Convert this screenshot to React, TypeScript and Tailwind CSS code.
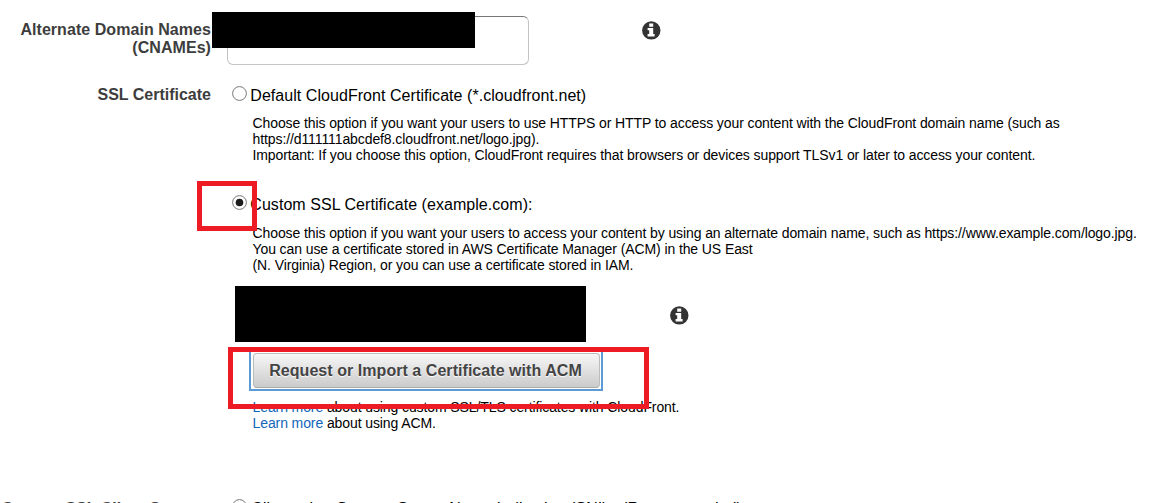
import React from 'react';

interface RowProps {
  label: React.ReactNode;
  className?: string;
  labelClassName?: string;
  children: React.ReactNode;
}

const FormRow: React.FC<RowProps> = ({ label, className = '', labelClassName = '', children }) => (
  <div className={`flex ${className}`}>
    <div className={`w-[211px] shrink-0 text-right font-bold text-[16px] leading-[18px] text-[#3d3d3d] whitespace-nowrap ${labelClassName}`}>
      {label}
    </div>
    <div className="flex-1 min-w-0">{children}</div>
  </div>
);

interface RadioOptionProps {
  checked?: boolean;
  className?: string;
  children: React.ReactNode;
}

const RadioOption: React.FC<RadioOptionProps> = ({ checked, className = '', children }) => (
  <label className={`flex h-5 ml-[21px] text-[16px] leading-5 tracking-[0.05px] whitespace-nowrap ${className}`}>
    <svg className="w-[15px] h-[15px] shrink-0 mr-[3.3px]" viewBox="0 0 15 15">
      <circle cx="7.5" cy="7.5" r="6.9" fill="#fff" stroke="#777" strokeWidth="1" />
      {checked && <circle cx="7.5" cy="7.5" r="3.8" fill="#1c1c1c" />}
    </svg>
    {children}
  </label>
);

const InfoIcon: React.FC<{ className?: string }> = ({ className = '' }) => (
  <svg className={`w-[19px] h-[19px] ${className}`} viewBox="0 0 19 19">
    <circle cx="9.3" cy="9.4" r="9.2" fill="#333" />
    <path d="M7.2 2.6h4v3.2h-4zM5.6 7.1h5.6v6h1.4v2.4h-7v-2.4h1.6V9.3H5.6z" fill="#fff" />
  </svg>
);

const Link: React.FC<{ children: React.ReactNode }> = ({ children }) => (
  <a href="#" className="text-[#1166bb]">{children}</a>
);

export default function App() {
  return (
    <div className="relative w-[1156px] h-[503px] overflow-hidden bg-white text-black font-['Liberation_Sans',Arial,sans-serif]">
      {/* Alternate domain names */}
      <FormRow
        className="h-[86px] pt-4"
        labelClassName="pt-[5px] tracking-[0.055px]"
        label={<>Alternate Domain Names<br />(CNAMEs)</>}
      >
        <div className="flex">
          <div className="ml-4 w-[302px] h-[49px] rounded-md border border-[#c4c4c4] border-t-[#777]" />
          <InfoIcon className="ml-[113px] mt-[5px]" />
        </div>
      </FormRow>

      {/* SSL certificate */}
      <FormRow label="SSL Certificate" className="h-[413px]">
        <RadioOption>
          <span>Default CloudFront Certificate (*.cloudfront.net)</span>
        </RadioOption>
        <div className="ml-[41.5px] mt-[9px] text-[14px] leading-4 tracking-[-0.095px] whitespace-nowrap">
          <p>Choose this option if you want your users to use HTTPS or HTTP to access your content with the CloudFront domain name (such as</p>
          <p>https://d111111abcdef8.cloudfront.net/logo.jpg).</p>
          <p>Important: If you choose this option, CloudFront requires that browsers or devices support TLSv1 or later to access your content.</p>
        </div>

        <RadioOption checked className="mt-8">
          <span>Custom SSL Certificate (example.com):</span>
        </RadioOption>
        <div className="ml-[41.5px] mt-[10px] text-[14px] leading-4 tracking-[-0.098px] whitespace-nowrap">
          <p>Choose this option if you want your users to access your content by using an alternate domain name, such as https://www.example.com/logo.jpg.</p>
          <p>You can use a certificate stored in AWS Certificate Manager (ACM) in the US East</p>
          <p>(N. Virginia) Region, or you can use a certificate stored in IAM.</p>
        </div>

        <div className="flex ml-6 mt-[13px] h-14">
          <div className="w-[351px] h-14 bg-black" />
          <InfoIcon className="ml-[84px] mt-5" />
        </div>

        <div className="ml-[38px] mt-2 w-[354px] h-[41px] border-2 border-[#5b9bd5] p-px pl-[2px]">
          <button className="block w-full h-full pr-[2px] rounded-[4px] border border-[#bcbcbc] border-b-[#ababab] bg-linear-to-b from-[#f7f7f7] to-[#cbcbcb] text-[16px] leading-[18px] tracking-[0.05px] font-bold text-[#444] [text-shadow:0_1px_1px_#fff] whitespace-nowrap">
            Request or Import a Certificate with ACM
          </button>
        </div>
        <div className="ml-[41.5px] mt-2 text-[14px] leading-4 tracking-[-0.098px] whitespace-nowrap">
          <p><Link>Learn more</Link> about using custom SSL/TLS certificates with CloudFront.</p>
          <p><Link>Learn more</Link> about using ACM.</p>
        </div>
      </FormRow>

      {/* Custom SSL client support */}
      <FormRow label="Custom SSL Client Support" labelClassName="pt-px">
        <RadioOption>
          <span className="pl-px leading-5">Clients that Support Server Name Indication (SNI) - (Recommended)</span>
        </RadioOption>
      </FormRow>

      {/* Redaction and highlight boxes */}
      <div className="absolute left-[212px] top-3 w-[263px] h-9 bg-black" />
      <div className="absolute left-[197px] top-[181px] w-[60px] h-[50px] border-5 border-[#ed1c24]" />
      <div className="absolute left-[228px] top-[347px] w-[421px] h-[62px] border-5 border-[#ed1c24]" />
    </div>
  );
}
